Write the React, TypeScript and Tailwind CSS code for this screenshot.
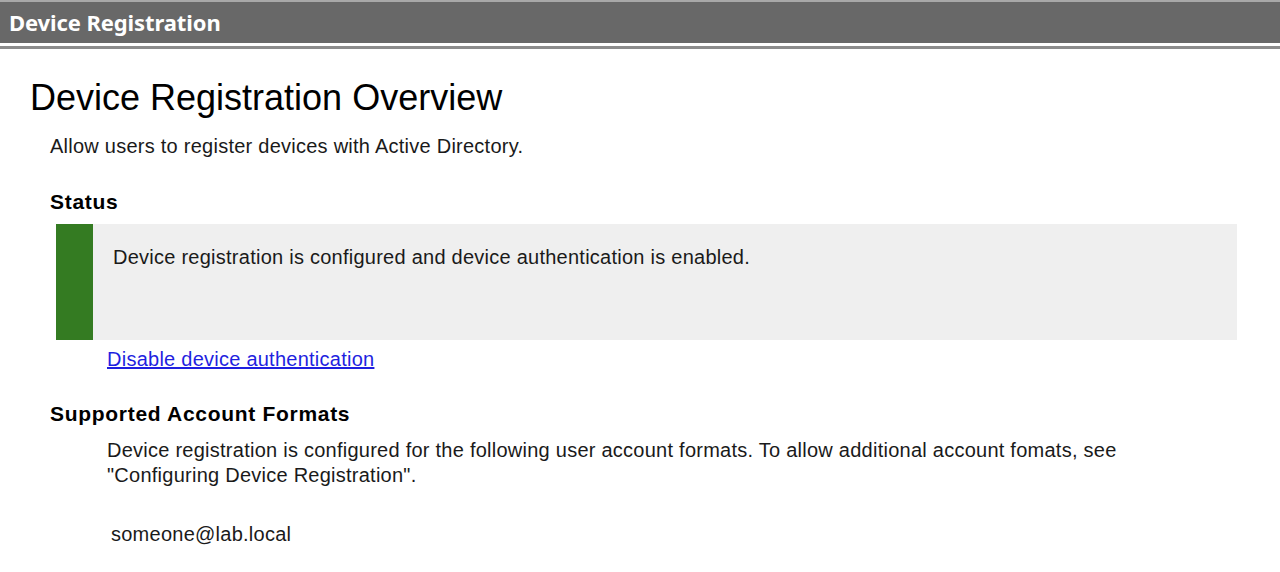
export default function App() {
  return (
    <div className="h-[572px] w-[1280px] overflow-hidden bg-white font-['Liberation_Sans',Arial,sans-serif] text-[#1a1a1a]">
      <div className="h-[2px] bg-[#a8a8a8]" />
      <div className="flex h-[41px] items-center bg-[#686868] pl-[9px]">
        <span className="font-['Noto_Sans',sans-serif] text-[22px] font-bold tracking-[-0.1px] text-white">
          Device Registration
        </span>
      </div>
      <div className="h-[3px] bg-white" />
      <div className="h-[3px] bg-[#8c8c8c]" />

      <div className="pl-[30px] pt-[28px]">
        <h1 className="text-[36px] leading-[42px] text-black">Device Registration Overview</h1>
        <p className="mt-[15px] pl-[20px] text-[20px] leading-[24px] tracking-[0.25px]">
          Allow users to register devices with Active Directory.
        </p>

        <h2 className="mt-[32px] pl-[20px] text-[21px] font-bold leading-[24px] tracking-[0.7px] text-black">
          Status
        </h2>
        <div className="ml-[26px] mt-[10px] flex h-[116px] w-[1181px]">
          <div className="w-[37px] bg-[#347b22]" />
          <div className="flex-1 bg-[#efefef] pl-[20px] pt-[21px] text-[20px] leading-[24px] tracking-[0.25px]">
            Device registration is configured and device authentication is enabled.
          </div>
        </div>
        <a
          href="#"
          className="ml-[77px] mt-[7px] inline-block text-[20px] leading-[24px] tracking-[0.25px] text-[#1f1fe0] underline"
        >
          Disable device authentication
        </a>

        <h2 className="mt-[29px] pl-[20px] text-[21px] font-bold leading-[24px] tracking-[0.7px] text-black">
          Supported Account Formats
        </h2>
        <div className="mt-[12px] pl-[77px] text-[20px] leading-[25px] tracking-[0.25px]">
          <p>
            Device registration is configured for the following user account formats. To allow additional account fomats, see
            <br />
            "Configuring Device Registration".
          </p>
          <p className="mt-[34px] pl-[4px]">someone@lab.local</p>
        </div>
      </div>
    </div>
  );
}
